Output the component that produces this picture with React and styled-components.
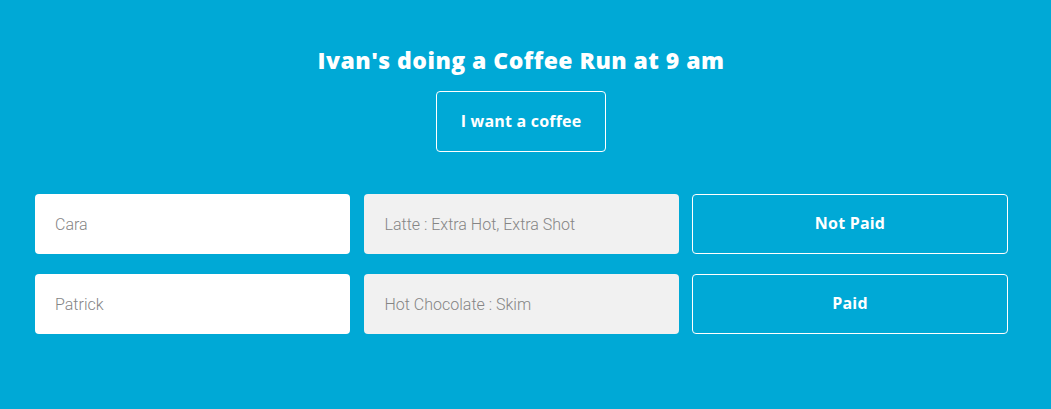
import React from 'react';
import styled, { createGlobalStyle } from 'styled-components';

const GlobalStyle = createGlobalStyle`
  html, body {
    margin: 0;
    padding: 0;
    background: #00a9d6;
  }
`;

const Page = styled.div`
  width: 1051px;
  height: 409px;
  box-sizing: border-box;
  background: #00a9d6;
  padding: 44px 44px 0 35px;
  font-family: "Open Sans", Lato, sans-serif;
`;

const Header = styled.div`
  display: flex;
  flex-direction: column;
  align-items: center;
`;

const Title = styled.h1`
  margin: 0;
  color: #fff;
  font-size: 23px;
  font-weight: 800;
  line-height: 32px;
  letter-spacing: 0.45px;
`;

const OutlineButton = styled.button`
  box-sizing: border-box;
  width: ${(p) => p.width || '100%'};
  height: ${(p) => p.height || '60px'};
  margin-top: ${(p) => p.top || '0'};
  padding: 0 0 2px;
  background: transparent;
  border: 1px solid #fff;
  border-radius: 4px;
  color: #fff;
  font-family: "Open Sans", Lato, sans-serif;
  font-size: 16px;
  font-weight: 700;
  letter-spacing: 0.2px;
  cursor: pointer;
`;

const Orders = styled.div`
  margin-top: 42px;
  display: flex;
  flex-direction: column;
  gap: 20px;
`;

const Row = styled.div`
  display: grid;
  grid-template-columns: 315px 315px 316px;
  column-gap: 13.5px;
`;

const Field = styled.div`
  box-sizing: border-box;
  height: 60px;
  display: flex;
  align-items: center;
  padding-left: ${(p) => (p.muted ? '21px' : '20px')};
  background: ${(p) => (p.muted ? '#f1f1f1' : '#fff')};
  border-radius: 4px;
  color: #858585;
  font-family: Roboto, "Open Sans", sans-serif;
  font-weight: 300;
  font-size: 16px;
`;

const orders = [
  { name: 'Cara', drink: 'Latte : Extra Hot, Extra Shot', paid: false },
  { name: 'Patrick', drink: 'Hot Chocolate : Skim', paid: true },
];

export default function App() {
  return (
    <Page>
      <GlobalStyle />
      <Header>
        <Title>Ivan's doing a Coffee Run at 9 am</Title>
        <OutlineButton width="170px" height="61px" top="15px">
          I want a coffee
        </OutlineButton>
      </Header>
      <Orders>
        {orders.map((o) => (
          <Row key={o.name}>
            <Field>{o.name}</Field>
            <Field muted>{o.drink}</Field>
            <OutlineButton>{o.paid ? 'Paid' : 'Not Paid'}</OutlineButton>
          </Row>
        ))}
      </Orders>
    </Page>
  );
}
